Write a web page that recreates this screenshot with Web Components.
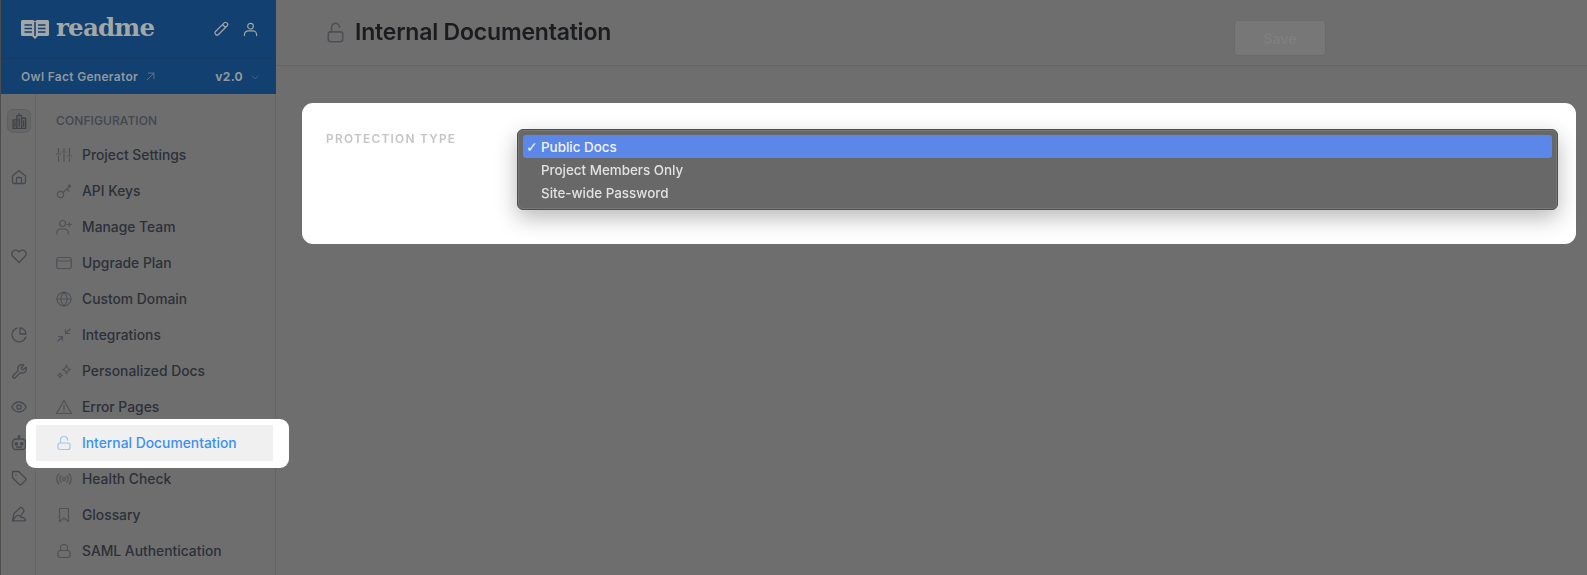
<!DOCTYPE html>
<html lang="en">
<head>
<meta charset="utf-8">
<title>Internal Documentation</title>
<style>
  html, body { margin: 0; height: 100%; overflow: hidden; background: #6e6e6e; }
  body { font-family: Inter, "Liberation Sans", sans-serif; }
</style>
</head>
<body>
<app-shell>
  <side-bar slot="side"></side-bar>
  <page-header slot="head" heading="Internal Documentation"></page-header>
  <protection-card slot="body" label="PROTECTION TYPE">
    <select-option selected>Public Docs</select-option>
    <select-option>Project Members Only</select-option>
    <select-option>Site-wide Password</select-option>
  </protection-card>
</app-shell>

<script>
const ICONS = {
  sliders: '<path d="M2.500 1.500v4M2.500 9v5.500M8 1.500v2M8 7v7.500M13.500 1.500v6M13.500 11v3.500M.5 7h4M6 5h4M11.500 9h4"/>',
  key: '<circle cx="4.500" cy="11.500" r="3.200"/><path d="M7 9.200 14 3.500M11 6l1.800 2"/><circle cx="13.500" cy="2.800" r="1"/>',
  team: '<circle cx="6.500" cy="4.500" r="3"/><path d="M.8 15v-1.500a4 4 0 0 1 4-3.500h3.500a4 4 0 0 1 4 3.500V15M13.300 3.500v4M11.300 5.500h4"/>',
  card: '<rect x=".8" y="2.500" width="14.400" height="11" rx="1.500"/><path d="M.8 6h14.400"/>',
  globe: '<circle cx="8" cy="8" r="7"/><path d="M1 8h14M8 1c-4 4-4 10 0 14M8 1c4 4 4 10 0 14"/>',
  collapse: '<path d="M2 14l4.500-4.500M2.500 9.500h4v4M14 2 9.500 6.500M13.500 6.500h-4v-4"/>',
  sparkle: '<path d="M10.500 2c.5 3 1.500 4 4 4.500-2.500.5-3.500 1.500-4 4.500-.5-3-1.500-4-4-4.500 2.500-.5 3.500-1.500 4-4.500zM4 10c.3 1.500.8 2 2.200 2.300C4.800 12.600 4.300 13.100 4 14.600c-.3-1.500-.8-2-2.200-2.300C3.200 12 3.700 11.500 4 10z"/>',
  warn: '<path d="M8 1.500 15.500 14.500H.5zM8 6v4.500M8 12.200v.3"/>',
  unlock: '<rect x="2" y="8" width="12" height="6.500" rx="2"/><path d="M4.500 8V5a3.500 3.500 0 0 1 7 0"/>',
  headlock: '<rect x="2.500" y="7.500" width="11" height="7.500" rx="1.800"/><path d="M5 7.500V4a3 3 0 0 1 6 0"/>',
  radio: '<circle cx="8" cy="8" r="1.500"/><path d="M5 5a4.200 4.200 0 0 0 0 6M11 5a4.200 4.200 0 0 1 0 6M2.800 3a7.200 7.200 0 0 0 0 10M13.200 3a7.200 7.200 0 0 1 0 10"/>',
  bookmark: '<path d="M3.500 1.500h9v13L8 11l-4.500 3.500z"/>',
  lock: '<rect x="2" y="7.500" width="12" height="7" rx="2"/><path d="M4.500 7.500V5a3.500 3.500 0 0 1 7 0v2.500"/>',
  home: '<path d="M1.500 7 8 1.500 14.500 7v6a1.500 1.500 0 0 1-1.500 1.500H3A1.500 1.500 0 0 1 1.500 13zM5.500 14.500V9.500a1 1 0 0 1 1-1h3a1 1 0 0 1 1 1v5"/>',
  heart: '<path d="M8 14.500 2 8.500a3.800 3.800 0 0 1 0-5.300 3.700 3.700 0 0 1 5.300 0l.7.7.7-.7a3.700 3.700 0 0 1 5.300 0 3.800 3.800 0 0 1 0 5.300z"/>',
  pie: '<path d="M14.800 10A7 7 0 1 1 6 1.200"/><path d="M9 1a6 6 0 0 1 6 6H9z"/>',
  wrench: '<path d="M10.500 4.500a.8.8 0 0 0 0 1.100l.9.9a.8.8 0 0 0 1.100 0l2.400-2.400a4.200 4.200 0 0 1-5.600 5.600l-5.200 5.200a1.500 1.500 0 0 1-2.100-2.100l5.200-5.200a4.200 4.200 0 0 1 5.600-5.600z"/>',
  eye: '<path d="M.8 8S3.500 3 8 3s7.200 5 7.200 5-2.700 5-7.200 5S.8 8 .8 8z"/><circle cx="8" cy="8" r="2.200"/>',
  robot: '<rect x="1.500" y="4" width="13" height="10.500" rx="3.500"/><path d="M8 1.500V4"/><circle cx="8" cy="1.500" r=".8"/><circle cx="5.200" cy="8.800" r="1.200" fill="currentColor"/><circle cx="10.800" cy="8.800" r="1.200" fill="currentColor"/><path d="M5.500 12h5"/>',
  tag: '<path d="M1.500 1.500h6.200l6.800 6.800a1.500 1.500 0 0 1 0 2.100l-4.100 4.100a1.500 1.500 0 0 1-2.100 0L1.500 7.700z"/><path d="M5 5h.1"/>',
  pen: '<path d="M1.500 14.800 3 7.500 9.800 1.200c1.800.8 2.800 2 3.200 4L10 9.500"/><path d="M1.500 14.800h13a3.200 3.200 0 0 0-3.200-3.300H10a3 3 0 0 0-5.500-.5c-.8.4-2 2.300-3 3.800z"/>',
  pencil: '<path d="M11.200 1.800a1.800 1.800 0 0 1 2.600 0l.4.4a1.800 1.800 0 0 1 0 2.600L5.500 13.500a2 2 0 0 1-2.800 0l-.2-.2a2 2 0 0 1 0-2.800zM9.500 3.500l3 3"/>',
  user: '<circle cx="8" cy="4.500" r="3"/><path d="M1.500 14.500v-1a4 4 0 0 1 4-4h5a4 4 0 0 1 4 4v1"/>',
  city: '<path d="M2 6.500h3.500v8H2zM5.500 2.500H10v12H5.500zM10 5h3.800v9.500H10zM7.700 1v1.500M3.700 8.500v4M7.700 5v7.500M11.900 7.500v5"/>',
  arrow: '<path d="M3 13 13 3M5 3h8v8"/>',
  chevron: '<path d="M3 6l5 5 5-5"/>'
};

function icon(name, size, width) {
  return `<svg viewBox="0 0 16 16" width="${size}" height="${size}" fill="none" stroke="currentColor"
    stroke-width="${width || 1.2}" stroke-linecap="round" stroke-linejoin="round">${ICONS[name]}</svg>`;
}

class AppShell extends HTMLElement {
  constructor() {
    super();
    this.attachShadow({ mode: 'open' });
    this.shadowRoot.innerHTML = `
      <style>
        :host { display: flex; height: 575px; background: #6e6e6e; filter: blur(.35px); }
        .main { flex: 1; min-width: 0; display: flex; flex-direction: column; }
      </style>
      <slot name="side"></slot>
      <div class="main">
        <slot name="head"></slot>
        <slot name="body"></slot>
      </div>
    `;
  }
}

class SideBar extends HTMLElement {
  constructor() {
    super();
    this.attachShadow({ mode: 'open' });
    const rail = [
      ['home', 26], ['heart', 43], ['pie', 43], ['wrench', 0], ['eye', 0], ['robot', 0], ['tag', -1], ['pen', 0]
    ];
    const links = [
      ['sliders', 'Project Settings'], ['key', 'API Keys'], ['team', 'Manage Team'], ['card', 'Upgrade Plan'],
      ['globe', 'Custom Domain'], ['collapse', 'Integrations'], ['sparkle', 'Personalized Docs'], ['warn', 'Error Pages'],
      ['unlock', 'Internal Documentation', true], ['radio', 'Health Check'], ['bookmark', 'Glossary'], ['lock', 'SAML Authentication']
    ];
    this.shadowRoot.innerHTML = `
      <style>
        :host { display: flex; flex-direction: column; width: 276px; height: 575px; flex: none; box-sizing: border-box;
          border-left: 1px solid #4d4d4d; border-right: 1px solid #646464; }
        .brand { background: #124070; height: 94px; margin-right: -1px; display: flex; flex-direction: column; color: #a3a7a5; }
        .top { height: 59px; flex: none; display: flex; align-items: center; padding: 0 18px 0 19px; gap: 14px; border-bottom: 1px solid #163c66; box-sizing: border-box; }
        .logo { display: flex; align-items: center; gap: 6px; flex: 1; }
        .logo b { font: 700 24.500px/1 "DejaVu Serif", serif; letter-spacing: -.8px; margin-top: -1px; }
        .sub { flex: 1; display: flex; align-items: center; padding: 0 16px 0 20px; font: 600 12px Inter, sans-serif; letter-spacing: .3px; color: #8f989f; }
        .sub .proj { flex: 1; display: flex; align-items: center; gap: 7px; }
        .sub .ver { display: flex; align-items: center; gap: 7px; font-size: 12px; font-weight: 700; }
        .bottom { flex: 1; display: flex; min-height: 0; }
        .rail { width: 35px; flex: none; box-sizing: border-box; padding: 15px 0 0 2px; border-right: 1px solid #646464; color: #464a50; display: flex; flex-direction: column; align-items: center; }
        .rail .tile { width: 24px; height: 24px; border-radius: 6px; background: #666; border: 1px solid #5f5f5f; display: flex; align-items: center; justify-content: center; box-sizing: border-box; color: #3f4349; }
        .rail .r { height: 36px; display: flex; align-items: center; justify-content: center; flex: none; }
        nav { flex: 1; display: flex; flex-direction: column; }
        h4 { margin: 0; padding: 19px 0 0 20px; height: 43px; box-sizing: border-box; font: 500 12px/16px Inter, sans-serif; color: #42464e; letter-spacing: .1px; }
      </style>
      <div class="brand">
        <div class="top">
          <div class="logo">
            <svg viewBox="0 0 30 20" width="30" height="20"><path fill="#a3a7a5" d="M2.500 1h9.500c1.500 0 2.500.5 3 1.500.5-1 1.500-1.500 3-1.500h9.500A1.500 1.500 0 0 1 29 2.500v13a1.500 1.500 0 0 1-1.500 1.500H18l-3 3-3-3H2.500A1.500 1.500 0 0 1 1 15.500v-13A1.500 1.500 0 0 1 2.500 1z"/><path stroke="#124070" stroke-width="1.500" d="M4.500 6H12M4.500 9.500H12M4.500 13H12M18 6h7.500M18 9.500h7.500M18 13h7.500M15 3v14"/></svg>
            <b>readme</b>
          </div>
          ${icon('pencil', 16)}
          ${icon('user', 15)}
        </div>
        <div class="sub">
          <span class="proj">Owl Fact Generator <span style="opacity:.7;display:flex">${icon('arrow', 11)}</span></span>
          <span class="ver">v2.0 <span style="opacity:.5;display:flex">${icon('chevron', 10)}</span></span>
        </div>
      </div>
      <div class="bottom">
        <div class="rail">
          <div class="tile">${icon('city', 17, 1.300)}</div>
          ${rail.map(([n, gap]) => `<div class="r" style="margin-top:${gap}px">${icon(n, 16, 1.300)}</div>`).join('')}
        </div>
        <nav>
          <h4>CONFIGURATION</h4>
          ${links.map(([n, t, on]) => `<nav-item icon="${n}"${on ? ' active' : ''}>${t}</nav-item>`).join('')}
        </nav>
      </div>
    `;
  }
}

class NavItem extends HTMLElement {
  constructor() {
    super();
    this.attachShadow({ mode: 'open' });
  }

  connectedCallback() {
    this.shadowRoot.innerHTML = `
      <style>
        :host { display: flex; align-items: center; position: relative; height: 36px; flex: none; padding-left: 20px; gap: 10px;
          font: 500 13.850px Inter, sans-serif; color: #2c3039; }
        svg { color: #4e5256; flex: none; }
        :host([active]) { color: #3a8ff0; z-index: 1; }
        :host([active]) svg { color: #9cc6f4; }
        :host([active])::before { content: ""; position: absolute; z-index: -1; left: -10px; right: -14px; top: -6px; bottom: -7px; background: #fff; border-radius: 9px; }
        :host([active])::after { content: ""; position: absolute; z-index: -1; left: 0; right: 2px; top: 0; bottom: 0; background: #f0f0f0; }
      </style>
      ${icon(this.getAttribute('icon'), 16)}
      <slot></slot>
    `;
  }
}

class PageHeader extends HTMLElement {
  constructor() {
    super();
    this.attachShadow({ mode: 'open' });
  }

  connectedCallback() {
    this.shadowRoot.innerHTML = `
      <style>
        :host { display: flex; align-items: center; height: 66px; flex: none; box-sizing: border-box; border-bottom: 1px solid #646464;
          padding: 0 0 0 49px; }
        svg { color: #4c5056; flex: none; margin-right: 9px; margin-top: -1px; }
        h1 { margin: 0; font: 600 23px Inter, sans-serif; color: #1a1c1f; letter-spacing: -.2px; margin-top: -1px; width: 879px; flex: none; }
        button { width: 92px; height: 36px; border: 1px solid #6a6a6a; border-radius: 4px; background: #777; color: #7f7f7f;
          font: 600 14px Inter, sans-serif; padding: 0; margin-top: 11px; }
      </style>
      ${icon('headlock', 21)}
      <h1>${this.getAttribute('heading')}</h1>
      <button>Save</button>
    `;
  }
}

class ProtectionCard extends HTMLElement {
  constructor() {
    super();
    this.attachShadow({ mode: 'open' });
  }

  connectedCallback() {
    this.shadowRoot.innerHTML = `
      <style>
        :host { display: flex; margin: 37px 11px 0 26px; height: 141px; box-sizing: border-box; background: #fff; border-radius: 11px;
          padding: 26px 18px 0 24px; }
        .lab { width: 191px; flex: none; padding-top: 1px; font: 600 11.800px/18px Inter, sans-serif; letter-spacing: 1.300px; color: #c4c4c4; }
        .menu { flex: 1; height: 81px; box-sizing: border-box; padding: 5px; border: 1px solid #4f4f4f; border-radius: 6px; background: #686868;
          box-shadow: 0 0 0 1px #777 inset, 0 8px 22px rgba(0,0,0,.28); display: flex; flex-direction: column; }
      </style>
      <div class="lab">${this.getAttribute('label')}</div>
      <div class="menu"><slot></slot></div>
    `;
  }
}

class SelectOption extends HTMLElement {
  constructor() {
    super();
    this.attachShadow({ mode: 'open' });
    this.shadowRoot.innerHTML = `
      <style>
        :host { display: flex; align-items: center; height: 23px; flex: none; padding-left: 18px; position: relative; border-radius: 3px;
          font: 500 13.400px Inter, "Liberation Sans", sans-serif; color: #e2e2e2; }
        :host([selected]) { background: #5a87e8; color: #f4f4f4; }
        .check { display: none; position: absolute; left: 3px; font: 700 14px "DejaVu Sans", sans-serif; }
        :host([selected]) .check { display: block; }
      </style>
      <span class="check">✓</span>
      <slot></slot>
    `;
  }
}

customElements.define('app-shell', AppShell);
customElements.define('side-bar', SideBar);
customElements.define('nav-item', NavItem);
customElements.define('page-header', PageHeader);
customElements.define('protection-card', ProtectionCard);
customElements.define('select-option', SelectOption);
</script>
</body>
</html>
